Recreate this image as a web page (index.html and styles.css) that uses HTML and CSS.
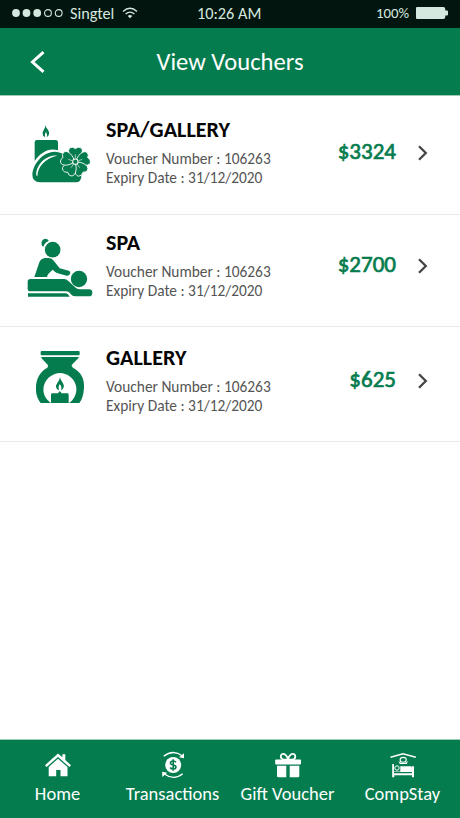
FILE: index.html
```html
<!DOCTYPE html>
<html lang="en">
<head>
<meta charset="utf-8">
<title>View Vouchers</title>
<link rel="stylesheet" href="styles.css">
</head>
<body>
<div class="screen">
  <div class="status">
    <svg class="signal" width="52" height="10" viewBox="0 0 52 10"><g fill="#d5e8df"><circle cx="4" cy="5" r="3.9"/><circle cx="14.5" cy="5" r="3.9"/><circle cx="25.2" cy="5" r="3.9"/></g><g fill="none" stroke="#d5e8df" stroke-width="1.1"><circle cx="36" cy="5" r="3.4"/><circle cx="46.7" cy="5" r="3.4"/></g></svg>
    <span class="carrier">Singtel</span>
    <svg class="wifi" width="16" height="12" viewBox="0 0 16 12" fill="none" stroke="#d5e8df" stroke-width="1.3"><path d="M1 4.4Q8-1.8 15 4.4M3.6 7.1Q8 3.2 12.4 7.1"/><path d="M5.7 9Q8 7.1 10.3 9L8 11.3Z" fill="#d5e8df" stroke="none"/></svg>
    <span class="clock">10:26 AM</span>
    <span class="percent">100%</span>
    <svg class="battery" width="32" height="12" viewBox="0 0 32 12" fill="#d5e8df"><path d="M1 0H27.5Q29 0 29.3 2V3.5H31Q32 3.5 32 4.5V7.5Q32 8.5 31 8.5H29.3V10Q29 12 27.5 12H1Q0 12 0 11V1Q0 0 1 0Z"/></svg>
  </div>
  <header class="header">
    <svg class="back" width="15" height="22" viewBox="0 0 15 22" fill="none" stroke="#fff" stroke-width="3"><path d="M13.5 1.2L2.5 11L13.5 20.8"/></svg>
    <h1 class="heading">View Vouchers</h1>
  </header>
  <main class="list">
    <section class="voucher first">
      <svg class="picture" width="80" height="75" viewBox="0 0 240 225" fill="#057c4e">
        <path d="M76 30C78 40 90 48 87 57Q86 64 80 66Q83 59 78 50Q73 57 75 66Q68 64 68 56C67 47 76 43 76 30Z"/>
        <path d="M44 82Q44 75 51 75H107Q114 75 114 82V106C88 97 62 112 44 138Z"/>
        <path d="M37 178C38 150 66 111 104 110C140 110 184 155 184 185Q182 202 168 202H60Q37 202 37 178Z"/>
        <path d="M111 122C82 120 56 141 49 170Q47 181 52 184C53 154 75 131 111 122Z" fill="#fff"/>
        <circle cx="165" cy="142" r="32" fill="#fff"/>
        <g stroke="#fff" stroke-width="2.5">
          <path id="petal" d="M166 138C151 130 138 106 151 98Q159 94 166 101Q174 93 184 99C193 109 180 129 166 138Z"/>
          <use href="#petal" transform="rotate(72 166 140)"/>
          <use href="#petal" transform="rotate(144 166 140)"/>
          <use href="#petal" transform="rotate(216 166 140)"/>
          <use href="#petal" transform="rotate(288 166 140)"/>
        </g>
        <circle cx="166" cy="140" r="9.5" fill="#fff"/><circle cx="166" cy="140" r="6.5"/>
        <path d="M166 118V130M187 133L176 137M179 158L172 148M153 158L160 148M145 133L156 137" stroke="#fff" stroke-width="1.8"/>
      </svg>
      <div class="details"><h2 class="title">SPA/GALLERY</h2><p class="meta number">Voucher Number : 106263</p><p class="meta">Expiry Date : 31/12/2020</p></div>
      <strong class="price">$3324</strong>
      <svg class="chevron" width="11" height="16" viewBox="0 0 11 16" fill="none" stroke="#444" stroke-width="2.3"><path d="M2 1.3L8.8 8L2 14.7"/></svg>
    </section>
    <section class="voucher second">
      <svg class="picture" width="80" height="75" viewBox="0 0 240 225" fill="#057c4e">
        <circle cx="98" cy="59" r="23.5"/><path d="M67 49Q61 35 69 29Q78 23 86 31L85 34Q74 38 71 49Z"/>
        <path d="M43 141L58 97Q63 85 75 84H85Q94 84 100 91L119 115L146 122Q153 125 150 132Q146 138 140 137L111 129Q106 127 98 119L87 130Q82 135 81 141Z"/>
        <circle cx="177" cy="147" r="24.5"/>
        <path d="M31 147H132Q140 147 145 153L168 174Q173 178 180 178H207Q217 178 217 188Q217 199 207 199H166Q159 199 154 194L149 188Q144 184 137 184H31Q23 184 23 176V155Q23 147 31 147Z"/>
        <path d="M24 190H137Q144 190 149 200H24Z"/>
      </svg>
      <div class="details"><h2 class="title">SPA</h2><p class="meta number">Voucher Number : 106263</p><p class="meta">Expiry Date : 31/12/2020</p></div>
      <strong class="price">$2700</strong>
      <svg class="chevron" width="11" height="16" viewBox="0 0 11 16" fill="none" stroke="#444" stroke-width="2.3"><path d="M2 1.3L8.8 8L2 14.7"/></svg>
    </section>
    <section class="voucher third">
      <svg class="picture" width="80" height="75" viewBox="0 0 240 225" fill="#057c4e">
        <rect x="62" y="33" width="117" height="13" rx="3"/>
        <path d="M63 51H177Q173 58 166 64L155 75Q154 79 159 83C183 96 194 116 192 143C191 164 186 179 178 189H62C51 174 47 160 48 140C49 115 61 94 82 83Q86 78 83 74L73 64Q66 58 63 51Z"/>
        <path d="M82 179C56 149 76 102 120 99C163 101 184 148 158 179Q153 185 149 188H91Z" fill="#fff"/>
        <path d="M120 111C122 124 135 132 131 142Q129 149 123 151Q127 141 119 132Q113 141 117 151Q109 149 108 141C107 131 118 126 120 111Z"/>
        <path d="M93 189V164Q93 160 97 160H115Q115 155 119 154Q124 155 124 160H142Q146 160 146 164V189Z"/>
      </svg>
      <div class="details"><h2 class="title">GALLERY</h2><p class="meta number">Voucher Number : 106263</p><p class="meta">Expiry Date : 31/12/2020</p></div>
      <strong class="price">$625</strong>
      <svg class="chevron" width="11" height="16" viewBox="0 0 11 16" fill="none" stroke="#444" stroke-width="2.3"><path d="M2 1.3L8.8 8L2 14.7"/></svg>
    </section>
  </main>
  <nav class="tabs">
    <a class="tab home"><svg width="30" height="30" viewBox="0 0 30 30" fill="#fff"><path d="M15 3.5L19.4 7.3V4.3H22.3V10L28 15.2L26.4 17L15 7L3.6 17L2 15.2Z"/><path d="M15 8.7L24.5 17V26.2H17.5V20H13.2V26.2H5.7V17Z"/></svg><span>Home</span></a>
    <a class="tab transactions"><svg width="30" height="30" viewBox="0 0 30 30" fill="none" stroke="#fff" stroke-width="1.3"><circle cx="15.2" cy="15" r="8" fill="#fff" stroke="none"/><path d="M5.7 6.3Q15-1.2 24.5 6M24.7 23.8Q16 30.8 6.8 24.2"/><path d="M26 3.2V8.2L21 7.3ZM4.2 27V21.8L9.3 22.7Z" fill="#fff" stroke="none"/><path d="M18 12.3Q17 11 15 11Q12.4 11.1 12.5 13Q12.5 14.4 15.2 15Q18 15.6 18 17.2Q17.8 19 15.2 19Q13.1 19 12.2 17.5M15.2 9.3V20.7" stroke="#057c4e" stroke-width="1.6"/></svg><span>Transactions</span></a>
    <a class="tab gift"><svg width="30" height="30" viewBox="0 0 30 30" fill="#fff"><rect x="2.2" y="9.5" width="25.8" height="5" rx=".8"/><path d="M4 15.8H13.3V27.3H5.3Q4 27.3 4 26ZM16.7 15.8H26.3V26Q26.3 27.3 25 27.3H16.7Z"/><path d="M15 9.3C12 9.8 8 10.2 7.8 6.8C7.8 2.4 13.1 2.6 15 9.3C16.9 2.6 22.3 2.4 22.3 6.8C22.2 10.2 18 9.8 15 9.3Z" fill="none" stroke="#fff" stroke-width="1.8"/></svg><span>Gift Voucher</span></a>
    <a class="tab stay"><svg width="30" height="30" viewBox="0 0 30 30" fill="#fff"><path d="M2.5 7.2L15 3.8L27.8 7.2" fill="none" stroke="#fff" stroke-width="1.5"/><ellipse cx="15.2" cy="9.8" rx="3.1" ry="2.4" fill="none" stroke="#fff" stroke-width="1.1"/><path d="M10.5 11Q12 13 15.2 13Q18.5 13 20 11L18.8 14H11.8Z"/><path d="M4.2 14H6V23.2H24V16.3H26V27.2H24V25.3H6.3V27.2H4.2Z"/><circle cx="9" cy="18" r="2.2" fill="none" stroke="#fff" stroke-width="1"/><path d="M12.3 16.3H23Q24 16.3 24 18V21.5H12.3ZM6 21.5H24V22H6Z"/></svg><span>CompStay</span></a>
  </nav>
</div>
</body>
</html>
```
FILE: styles.css
```css
* { box-sizing: border-box; }
body { margin: 0; background: #fff; font-family: Carlito, Calibri, Lato, "Noto Sans", sans-serif; }
svg { display: block; flex: none; }
h1, h2, p { margin: 0; font-weight: 400; }
.screen { width: 460px; height: 818px; display: flex; flex-direction: column; }
.status { height: 28px; background: #03150f; color: #d5e8df; display: grid; grid-template-columns: 52px 52px 75px 1fr 40px 32px; align-items: center; padding: 0 12px; font-size: 16.3px; line-height: 26px; white-space: nowrap; }
.status > * { margin-top: -2px; }
.carrier { padding-left: 6px; }
.wifi { margin-left: 6px; }
.clock { padding-left: 6px; }
.percent { font-size: 14.8px; }
.header { height: 68px; background: #057c4e; border-bottom: 1px solid #9bccb7; display: grid; grid-template-columns: 50px 1fr 50px; align-items: center; padding: 0 30px; color: #fff; }
.heading { text-align: center; font-size: 24.6px; line-height: 30px; white-space: nowrap; }
.list { flex: 1; }
.voucher { display: grid; grid-template-columns: 80px 1fr auto 11px; padding: 0 32px 0 20px; border-bottom: 1px solid #e9e9e9; }
.first { height: 119px; padding-top: 19px; }
.second { height: 112px; padding-top: 15px; }
.third { height: 115px; padding-top: 13px; }
.first .details, .first .price, .first .chevron { margin-top: 2px; }
.second .details, .second .price, .second .chevron { margin-top: 0; }
.third .details, .third .price, .third .chevron { margin-top: 5px; }
.details { padding-left: 6px; white-space: nowrap; }
.title { font-weight: 700; font-size: 22.1px; line-height: 26px; color: #050505; }
.meta { font-size: 15.4px; line-height: 18.5px; color: #555; }
.number { padding-top: 7px; }
.price { font-size: 23px; line-height: 30px; padding-top: 19px; margin-right: 21px; font-weight: 400; -webkit-text-stroke: .7px #057c4e; color: #057c4e; }
.chevron { position: relative; top: 28px; }
.tabs { height: 79px; background: #057c4e; border-top: 1px solid #9bccb7; display: grid; grid-template-columns: repeat(4, 115px); color: #fff; }
.tab { display: flex; flex-direction: column; align-items: center; padding-top: 10px; font-size: 18.5px; line-height: 27px; white-space: nowrap; }
```
